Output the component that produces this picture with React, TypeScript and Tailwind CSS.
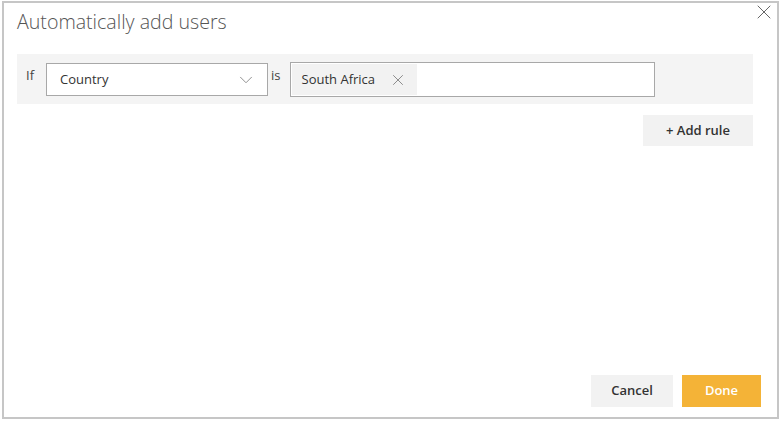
import { ChevronDown, X } from 'lucide-react'

export default function App() {
  return (
    <div className="h-[422px] w-[780px] bg-white pl-[2px] pt-[1px] font-['Open_Sans',sans-serif]">
      <div className="relative flex h-[418px] w-[777px] flex-col border-2 border-[#c6c6c6] bg-white">
        <button className="absolute right-[1px] top-[-3px] text-[#666]">
          <X size={24} strokeWidth={1} />
        </button>
        <h1 className="ml-[13px] mt-[6px] text-[19.6px] font-light leading-[26px] text-[#555]">Automatically add users</h1>

        <div className="ml-[13px] mt-[19px] flex h-[50px] w-[736px] items-start bg-[#f4f4f4] pt-[8px]">
          <span className="ml-[9px] mt-[4px] text-[13px] text-[#444]">If</span>
          <div className="ml-[12px] mt-[1px] flex h-[33px] w-[222px] items-center justify-between border border-[#a8a8a8] bg-white pl-[13px] pr-[10px]">
            <span className="text-[13px] text-[#333]">Country</span>
            <ChevronDown size={22} strokeWidth={1} className="text-[#888]" />
          </div>
          <span className="ml-[3px] mt-[4px] text-[13px] text-[#444]">is</span>
          <div className="ml-[9px] flex h-[35px] w-[365px] items-center border border-[#a8a8a8] bg-white p-[1px]">
            <div className="flex h-full items-center gap-[14px] bg-[#f2f2f2] pl-[10px] pr-[10px]">
              <span className="text-[13px] text-[#333]">South Africa</span>
              <X size={18} strokeWidth={1.1} className="text-[#777]" />
            </div>
          </div>
        </div>

        <div className="mt-[11px] flex w-[749px] justify-end">
          <button className="h-[31px] w-[110px] bg-[#f2f2f2] text-[13px] font-semibold text-[#333]">+ Add rule</button>
        </div>

        <div className="flex-1" />

        <div className="mb-[10px] flex justify-end gap-[9px] pr-[16px]">
          <button className="h-[32px] w-[82px] bg-[#f2f2f2] text-[13px] font-semibold text-[#333]">Cancel</button>
          <button className="h-[32px] w-[79px] bg-[#f4b337] text-[13px] font-semibold text-white">Done</button>
        </div>
      </div>
    </div>
  )
}
